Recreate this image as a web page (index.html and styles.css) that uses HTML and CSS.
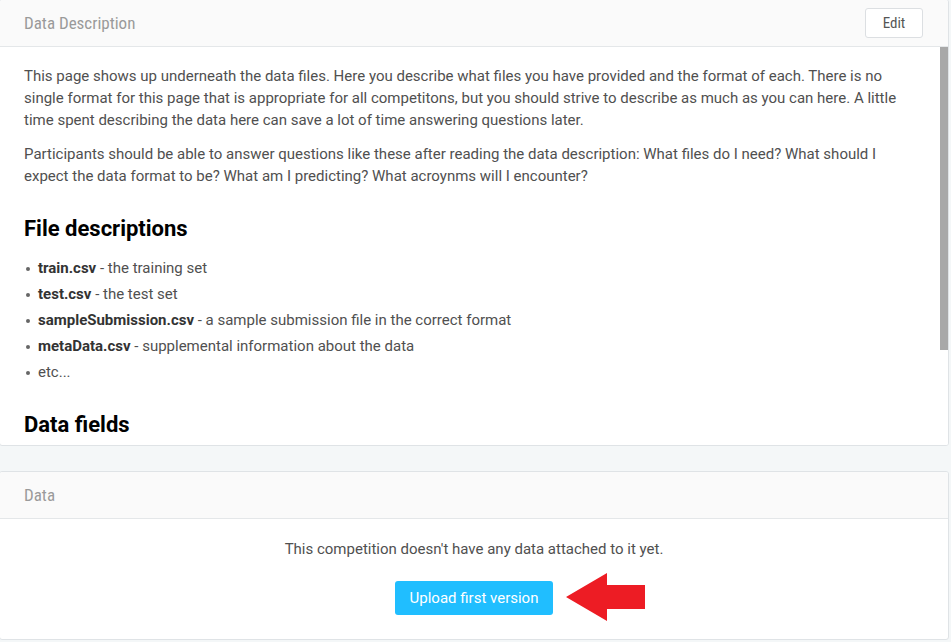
FILE: index.html
```html
<!DOCTYPE html>
<html>
<head>
<meta charset="utf-8">
<link rel="stylesheet" href="styles.css">
</head>
<body>
<section class="card card-desc">
  <header class="card-head">
    <span class="card-title">Data Description</span>
    <button class="btn-edit">Edit</button>
  </header>
  <div class="card-scroll">
    <p>This page shows up underneath the data files. Here you describe what files you have provided and the format of each. There is no single format for this page that is appropriate for all competitons, but you should strive to describe as much as you can here. A little time spent describing the data here can save a lot of time answering questions later.</p>
    <p>Participants should be able to answer questions like these after reading the data description: What files do I need? What should I expect the data format to be? What am I predicting? What acroynms will I encounter?</p>
    <h2>File descriptions</h2>
    <ul>
      <li><b>train.csv</b> - the training set</li>
      <li><b>test.csv</b> - the test set</li>
      <li><b>sampleSubmission.csv</b> - a sample submission file in the correct format</li>
      <li><b>metaData.csv</b> - supplemental information about the data</li>
      <li>etc...</li>
    </ul>
    <h2>Data fields</h2>
  </div>
  <div class="scrollbar"><div class="scroll-thumb"></div></div>
</section>
<section class="card card-data">
  <header class="card-head">
    <span class="card-title">Data</span>
  </header>
  <div class="card-body">
    <p class="empty">This competition doesn't have any data attached to it yet.</p>
    <div class="upload-row">
      <button class="btn-upload">Upload first version</button>
      <svg class="arrow" width="80" height="50" viewBox="0 0 80 50"><polygon points="0,24 41,0 41,12 79,12 79,36 41,36 41,48" fill="#ed1c24"/></svg>
    </div>
  </div>
</section>
</body>
</html>
```
FILE: styles.css
```css
* { box-sizing: border-box; }
html, body { margin: 0; padding: 0; }
body {
  background: #f4f7f8;
  font-family: Roboto, "Liberation Sans", sans-serif;
  font-size: 15px;
  color: #505050;
  width: 951px;
  height: 642px;
  overflow: hidden;
}
.card {
  background: #fff;
  border: 1px solid #dfe3e6;
  border-radius: 3px;
  margin: 0 2px 0 -1px;
  overflow: hidden;
}
.card-desc { margin-top: -1px; position: relative; }
.card-data { margin-top: 25px; }
.card-head {
  height: 47px;
  background: #fafafa;
  border-bottom: 1px solid #e4e7e9;
  display: flex;
  align-items: center;
  justify-content: space-between;
  padding: 0 24px 0 24px;
}
.card-title {
  font-family: "Liberation Sans Narrow", "Roboto Condensed", Roboto, sans-serif;
  font-stretch: condensed;
  color: #9a9a9a;
  font-size: 17px;
}
.btn-edit {
  width: 58px;
  height: 30px;
  margin-right: 1px;
  background: #fff;
  border: 1px solid #dcdfe2;
  border-radius: 3px;
  font-family: "Liberation Sans Narrow", Roboto, sans-serif;
  font-stretch: condensed;
  font-size: 15px;
  color: #555;
  padding: 0;
}
.card-scroll {
  height: 398px;
  overflow: hidden;
  padding: 18px 24px 24px 24px;
  line-height: 22px;
}
.scrollbar {
  position: absolute;
  right: 0;
  top: 47px;
  bottom: 0;
  width: 8px;
  background: #fff;
}
.scroll-thumb {
  height: 303px;
  background: #a8a8a8;
}
.card-scroll p { margin: 0 0 12px 0; }
.card-scroll h2 {
  margin: 28px 0 14px 0;
  font-size: 22px;
  line-height: 28px;
  font-weight: 700;
  color: #000;
}
.card-scroll ul { list-style: none; margin: 0; padding: 0 0 0 14px; }
.card-scroll li { position: relative; margin-bottom: 4px; }
.card-scroll li::before {
  content: "";
  position: absolute;
  left: -12px;
  top: 10px;
  width: 4px;
  height: 4px;
  border-radius: 50%;
  background: #666;
}
.card-scroll b { color: #333; font-weight: 700; }
.card-body {
  padding: 19px 24px 24px;
  text-align: center;
  height: 120px;
}
.empty { margin: 0; line-height: 22px; }
.upload-row {
  margin-top: 21px;
  position: relative;
  display: flex;
  justify-content: center;
}
.btn-upload {
  width: 158px;
  height: 34px;
  background: #20beff;
  border: none;
  border-radius: 3px;
  color: #fff;
  font-family: Roboto, "Liberation Sans", sans-serif;
  font-size: 15px;
  padding: 0;
}
.arrow {
  position: absolute;
  left: 542px;
  top: -8px;
}
```
